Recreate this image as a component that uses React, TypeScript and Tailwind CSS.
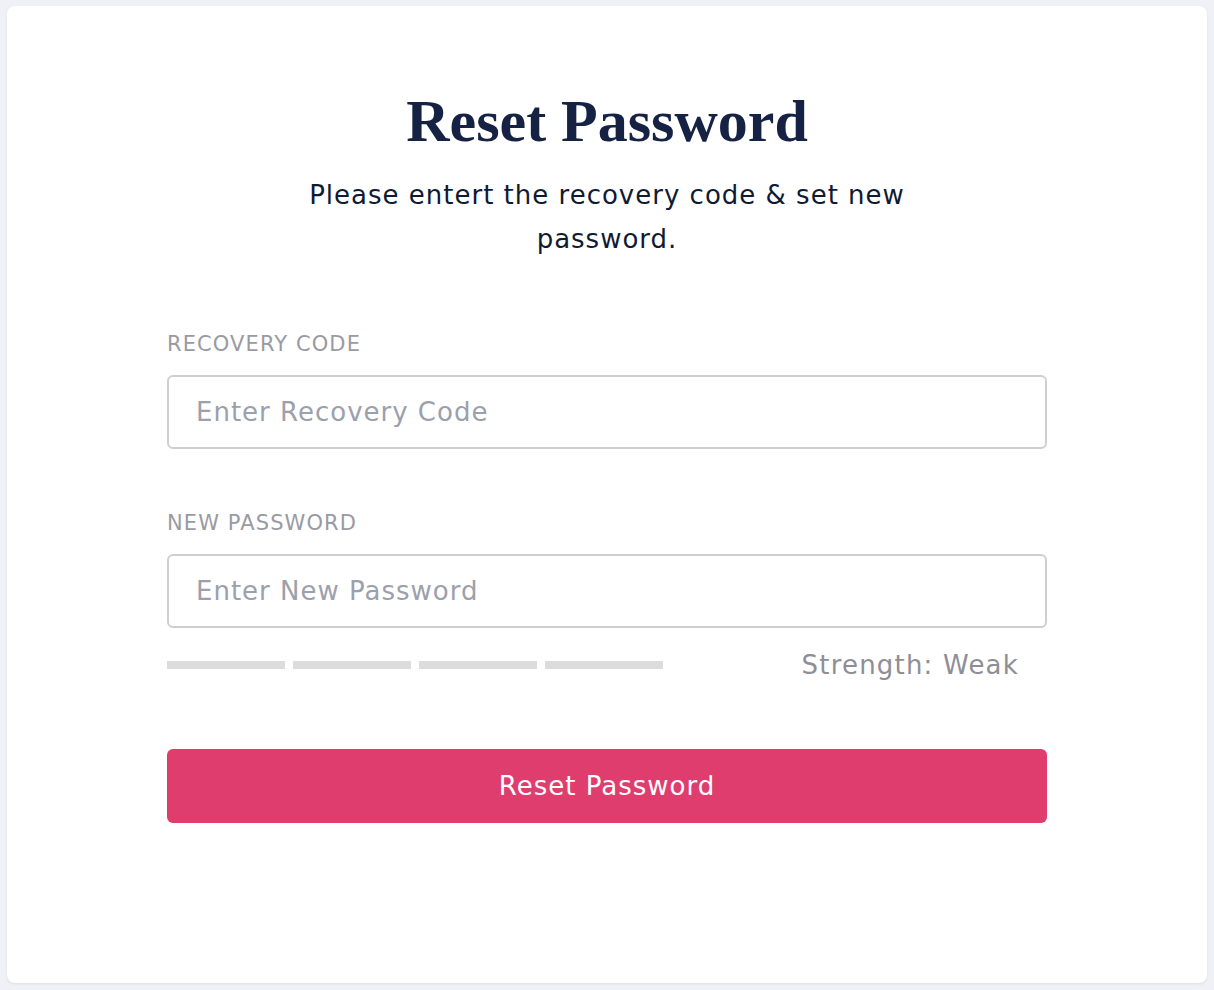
export default function App() {
  const bars = [0, 1, 2, 3];
  return (
    <div className="min-h-screen bg-[#f0f1f6] p-[6px] pr-[7px]" style={{ fontFamily: '"DejaVu Sans", sans-serif' }}>
      <div className="bg-white rounded-lg shadow-[0_1px_3px_rgba(0,0,0,0.08)] h-[977px] ml-px">
        <div className="pt-[79px] flex flex-col items-center">
          <h1
            className="text-[60px] leading-[72px] font-bold text-[#152244]"
            style={{ fontFamily: '"Liberation Serif", serif' }}
          >
            Reset Password
          </h1>
          <p className="mt-[16px] max-w-[640px] text-center text-[26px] leading-[44px] tracking-[1px] text-[#0f1a33]">
            Please entert the recovery code &amp; set new password.
          </p>
        </div>

        <form className="mx-auto w-[880px] mt-[71px]" onSubmit={(e) => e.preventDefault()}>
          <label className="block text-[21px] leading-[24px] text-[#9a9aa2] tracking-[1.1px]">RECOVERY CODE</label>
          <input
            type="text"
            placeholder="Enter Recovery Code"
            className="mt-[19px] w-full h-[74px] rounded-md border-2 border-[#cfcfd3] px-[27px] text-[26px] tracking-[1px] text-[#333] placeholder-[#9ba0ac] outline-none"
          />

          <label className="block mt-[62px] text-[21px] leading-[24px] text-[#9a9aa2] tracking-[1.1px]">NEW PASSWORD</label>
          <input
            type="password"
            placeholder="Enter New Password"
            className="mt-[19px] w-full h-[74px] rounded-md border-2 border-[#cfcfd3] px-[27px] text-[26px] tracking-[1px] text-[#333] placeholder-[#9ba0ac] outline-none"
          />

          <div className="mt-[21px] flex items-center justify-between pr-[28px]">
            <div className="flex gap-[8px]">
              {bars.map((b) => (
                <div key={b} className="w-[118px] h-[8px] bg-[#dcdcdc]" />
              ))}
            </div>
            <span className="text-[26px] leading-[32px] tracking-[1.2px] text-[#8e8e96]">Strength: Weak</span>
          </div>

          <button
            type="submit"
            className="mt-[68px] w-full h-[74px] rounded-md bg-[#e03d6f] text-white text-[26px] tracking-[1px]"
          >
            Reset Password
          </button>
        </form>
      </div>
    </div>
  );
}
